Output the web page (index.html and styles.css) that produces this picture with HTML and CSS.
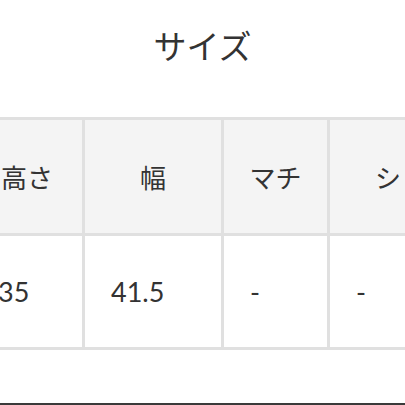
FILE: index.html
```html
<!DOCTYPE html>
<html lang="ja">
<head>
<meta charset="utf-8">
<link rel="stylesheet" href="styles.css">
</head>
<body>
<div class="page">
  <h2 class="title">サイズ</h2>
  <div class="table-wrap">
    <div class="grid">
      <div class="cell head">高さ</div>
      <div class="cell head">幅</div>
      <div class="cell head">マチ</div>
      <div class="cell head">ショルダー</div>
      <div class="cell body">35</div>
      <div class="cell body">41.5</div>
      <div class="cell body">-</div>
      <div class="cell body">-</div>
    </div>
  </div>
  <div class="rule"></div>
</div>
</body>
</html>
```
FILE: styles.css
```css
html, body {
  margin: 0;
  padding: 0;
  overflow: hidden;
  background: #fff;
}
.page {
  width: 405px;
  height: 405px;
  overflow: hidden;
  font-family: Lato, "Noto Sans CJK JP", sans-serif;
  color: #333;
}
.title {
  margin: 0;
  padding-top: 30px;
  height: 33px;
  line-height: 33px;
  font-size: 33px;
  font-weight: 400;
  text-align: center;
  margin-bottom: 54px;
}
.table-wrap {
  width: 405px;
  overflow: hidden;
}
.grid {
  margin-left: -31px;
  width: max-content;
  display: grid;
  grid-template-columns: 110px 136px 103px 220px;
  grid-template-rows: 113px 111px;
  gap: 3px;
  padding: 3px;
  background: #e0e0e0;
}
.cell {
  display: flex;
  align-items: center;
  font-size: 26px;
  white-space: nowrap;
}
.head {
  background: #f4f4f4;
  justify-content: center;
}
.body {
  background: #fff;
  padding-left: 26px;
  font-size: 27px;
}
.rule {
  margin-top: 53px;
  height: 2px;
  background: #3a3a3a;
}
```
